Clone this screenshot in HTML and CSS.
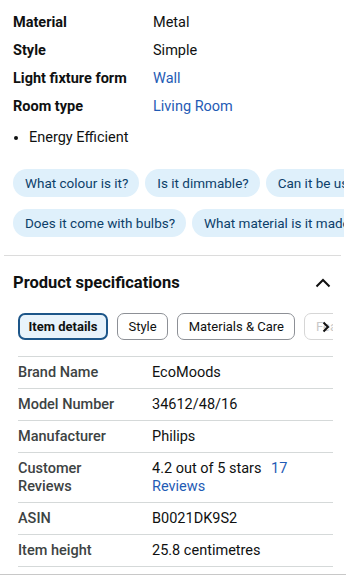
FILE: index.html
```html
<!DOCTYPE html>
<html lang="en">
<head>
    <meta charset="UTF-8">
    <meta name="viewport" content="width=device-width, initial-scale=1.0">
    <title>Product details</title>
    <link rel="stylesheet" href="styles.css">
</head>
<body>
    <div class="attrs">
        <div class="attr-label">Material</div>
        <div class="attr-value">Metal</div>
        <div class="attr-label">Style</div>
        <div class="attr-value">Simple</div>
        <div class="attr-label">Light fixture form</div>
        <div class="attr-value link">Wall</div>
        <div class="attr-label">Room type</div>
        <div class="attr-value link">Living Room</div>
    </div>

    <ul class="bullets">
        <li>Energy Efficient</li>
    </ul>

    <div class="questions">
        <div class="q-row">
            <span class="chip">What colour is it?</span>
            <span class="chip">Is it dimmable?</span>
            <span class="chip">Can it be used outdoors?</span>
        </div>
        <div class="q-row">
            <span class="chip">Does it come with bulbs?</span>
            <span class="chip">What material is it made of?</span>
        </div>
    </div>

    <hr class="divider">

    <div class="specs-head">
        <h2>Product specifications</h2>
        <svg class="chevron" width="16" height="10" viewBox="0 0 16 10">
            <path d="M1.5 8.5 L8 2 L14.5 8.5" fill="none" stroke="#111" stroke-width="2"/>
        </svg>
    </div>

    <div class="specs">
        <div class="tabs-wrap">
            <div class="tabs">
                <span class="tab active">Item details</span>
                <span class="tab">Style</span>
                <span class="tab">Materials &amp; Care</span>
                <span class="tab faded">Features</span>
            </div>
            <svg class="tab-next" width="8" height="12" viewBox="0 0 8 12">
                <path d="M1.5 1.5 L6 6 L1.5 10.5" fill="none" stroke="#111" stroke-width="2"/>
            </svg>
        </div>

        <table class="spec-table">
            <tr><th>Brand Name</th><td>EcoMoods</td></tr>
            <tr><th>Model Number</th><td>34612/48/16</td></tr>
            <tr><th>Manufacturer</th><td>Philips</td></tr>
            <tr><th>Customer Reviews</th><td>4.2 out of 5 stars <a class="link">17 Reviews</a></td></tr>
            <tr><th>ASIN</th><td>B0021DK9S2</td></tr>
            <tr><th>Item height</th><td>25.8 centimetres</td></tr>
        </table>
    </div>

    <div class="page-end"></div>
</body>
</html>
```

FILE: styles.css
```css
body {
    margin: 0;
    font-family: Roboto, "Noto Sans", Arial, sans-serif;
    font-size: 14.5px;
    color: #0f1111;
    background: #fff;
    overflow-x: hidden;
}
.link {
    color: #1f5bb5;
}
.attrs {
    display: grid;
    grid-template-columns: 140px 1fr;
    grid-auto-rows: 28px;
    align-items: center;
    padding: 8px 13px 0;
}
.attr-label {
    font-weight: 700;
}
.bullets {
    margin: 4px 0 0;
    padding: 0 0 0 29px;
    line-height: 28px;
}
.questions {
    display: flex;
    flex-direction: column;
    gap: 12px;
    margin: 17px 2px 0 13px;
    overflow: hidden;
}
.q-row {
    display: flex;
    gap: 6px;
    white-space: nowrap;
}
.chip {
    flex: none;
    height: 28px;
    line-height: 28px;
    padding: 0 11px 0 12px;
    border-radius: 14px;
    background: #dff0fb;
    color: #0d3f6a;
    font-size: 13.5px;
}
.divider {
    border: 0;
    border-top: 1px solid #dcdcdc;
    margin: 18px 5px 0 4px;
}
.specs-head {
    display: flex;
    align-items: center;
    justify-content: space-between;
    padding: 15px 15px 0 13px;
}
.specs-head h2 {
    margin: 0;
    font-size: 16.5px;
    font-weight: 700;
    line-height: 24px;
}
.specs {
    margin: 18px 13px 0 18px;
}
.tabs-wrap {
    position: relative;
    overflow: hidden;
}
.tabs {
    display: flex;
    gap: 9px;
    white-space: nowrap;
}
.tab {
    flex: none;
    height: 25px;
    line-height: 25px;
    padding: 0 10.5px;
    border: 1px solid #8d9096;
    border-radius: 7px;
    font-size: 13px;
    background: #fff;
}
.tab.active {
    border: 2px solid #1d5689;
    height: 23px;
    line-height: 23px;
    padding: 0 8.5px;
    background: #e8f3fb;
    font-weight: 700;
}
.tab.faded {
    color: #c8c8c8;
    border-color: #d6d6d6;
}
.tab-next {
    position: absolute;
    right: 3px;
    top: 8px;
}
.spec-table {
    width: 100%;
    margin-top: 16px;
    border-collapse: collapse;
    border-top: 1px solid #d5d9d9;
}
.spec-table th,
.spec-table td {
    padding: 7px 0 6px;
    border-bottom: 1px solid #d5d9d9;
    text-align: left;
    vertical-align: top;
    line-height: 18px;
}
.spec-table th {
    width: 112px;
    padding-right: 22px;
    color: #3d4343;
    font-weight: 500;
}
.spec-table td .link {
    margin-left: 6px;
}
.page-end {
    margin-top: 7px;
    border-top: 1px solid #c8c8c8;
}
```
